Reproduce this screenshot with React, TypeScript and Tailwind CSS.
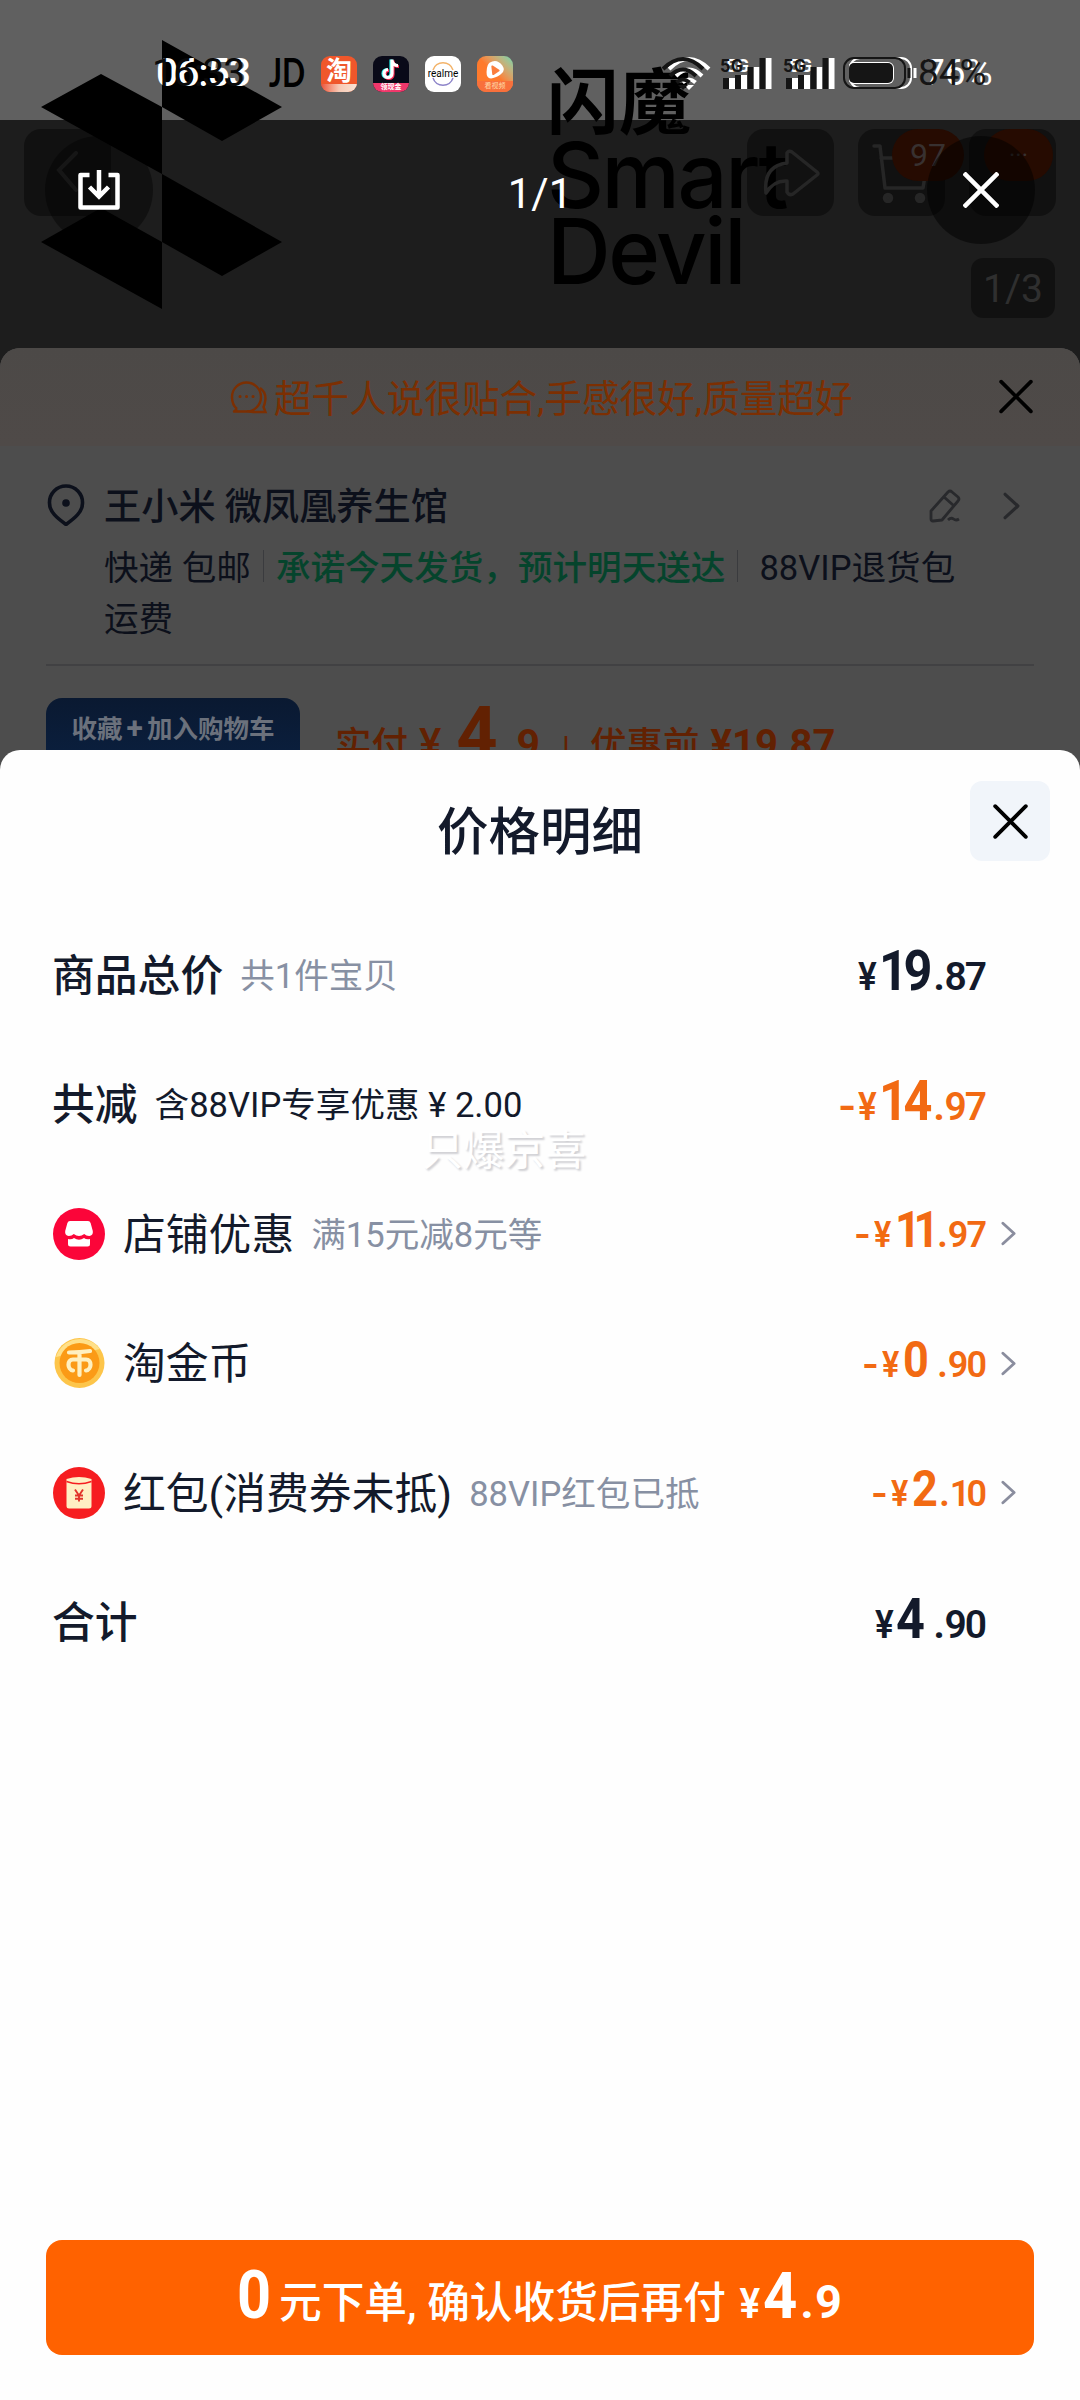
import React from 'react';

interface PriceProps {
  integer: string;
  decimal: string;
  negative?: boolean;
  small?: boolean;
  integerClass?: string;
  decimalClass?: string;
}

interface DetailRowProps extends PriceProps {
  label: string;
  note?: string;
  noteClass?: string;
  icon?: React.ReactNode;
  strong?: boolean;
  arrow?: boolean;
}

const CloseIcon = ({ className, width = 2.6 }: { className: string; width?: number }) => (
  <svg viewBox="0 0 24 24" fill="none" stroke="currentColor" strokeWidth={width} strokeLinecap="round" className={className}>
    <path d="M1.5 1.5l21 21M22.5 1.5l-21 21" />
  </svg>
);

const Chevron = ({ className }: { className: string }) => (
  <svg viewBox="0 0 16 26" fill="none" stroke="currentColor" strokeWidth="3" strokeLinecap="round" strokeLinejoin="round" className={className}>
    <path d="M2 2l12 11L2 24" />
  </svg>
);

const ShopIcon = () => (
  <svg viewBox="0 0 52 52" className="h-[52px] w-[52px]">
    <circle cx="26" cy="26" r="26" fill="#fb0539" />
    <path d="M17 13h18q2 0 2.600 2l2.200 8q.6 4.500-3.600 5-3 0-5-2-2.500 2-5.200 2t-5.200-2q-2 2-5 2-4.200-.5-3.600-5l2.200-8q.6-2 2.600-2z" fill="#fff" />
    <path d="M15 31q3.500 1 6-1 2.500 1.800 5 1.800t5-1.800q2.500 2 6 1v5q0 2.500-2.500 2.500h-17Q15 38.500 15 36z" fill="#fff" />
  </svg>
);

const CoinIcon = () => (
  <svg viewBox="0 0 52 52" className="h-[52px] w-[52px]">
    <circle cx="26.500" cy="26" r="25" fill="#fdc54a" />
    <path d="M3 20A25 25 0 0 1 47 12L38 14 12 18z" fill="#ffe08a" />
    <circle cx="26.500" cy="26" r="20" fill="#fb9a16" />
    <g fill="none" stroke="#fff0c0" strokeWidth="4.200" strokeLinecap="round">
      <path d="M16 15.500q11 0 21-1.500M26.500 15v23M20 33.500c-6-1-6-11 0-11h13c6 0 6 10 0 11" />
    </g>
  </svg>
);

const PacketIcon = () => (
  <svg viewBox="0 0 52 52" className="h-[52px] w-[52px]">
    <circle cx="26" cy="26" r="26" fill="#f61d20" />
    <path d="M13.500 12q12.500-4 25 0v27q0 2.500-2.500 2.500H16q-2.500 0-2.500-2.500z" fill="#ffefc4" />
    <path d="M13.500 14.500q12.500 4.500 25 0" fill="none" stroke="#f61d20" strokeWidth="1.500" />
    <path d="M22 22.500l4 6 4-6M26 28.500v6M22 28.500h8M22 31.800h8" fill="none" stroke="#e2342c" strokeWidth="1.900" />
  </svg>
);

const Price = ({ integer, decimal, negative, small, integerClass = 'mr-[8px]', decimalClass = 'tracking-[-2px]' }: PriceProps) => (
  <div className={`mb-[7px] flex items-baseline leading-none font-bold ${small ? 'text-[36px]' : 'text-[39px]'}`}>
    {negative && <span className="mr-[6px] inline-block w-[14px] origin-left scale-x-[1.2] text-center">-</span>}
    <span className="inline-block w-[21px] origin-left scale-x-[0.9] font-semibold">¥</span>
    <span className={`inline-block origin-left scale-x-[0.9] ${integerClass} ${small ? 'text-[50px]' : 'text-[56px]'}`}>{integer}</span>
    <span className="w-[11px] text-center">.</span>
    <span className={`font-semibold ${decimalClass}`}>{decimal}</span>
  </div>
);

const DetailRow = ({ label, note, noteClass = 'text-[#8790a3]', icon, strong, arrow, ...price }: DetailRowProps) => (
  <div className="flex h-[129.500px] items-center pl-[52px]">
    {icon && <div className="mr-[18px] ml-px shrink-0">{icon}</div>}
    <span className={`mt-[3px] text-[42.800px] leading-none whitespace-nowrap ${strong ? 'font-medium' : 'font-normal'}`}>{label}</span>
    {note && <span className={`mt-[3px] ml-[17px] text-[34.600px] leading-none whitespace-nowrap ${noteClass}`}>{note}</span>}
    <div className={`ml-auto flex items-center ${price.negative ? 'text-[#f26a13]' : 'text-[#131a2b]'}`}>
      <Price {...price} />
      <div className="w-[95px] pl-[16px]">{arrow && <Chevron className="h-[25px] w-[15px] text-[#8a8d9e]" />}</div>
    </div>
  </div>
);

const Signal = () => (
  <svg viewBox="0 0 48 34" className="h-[34px] w-[48px]" fill="currentColor">
    <path d="M3 22h6v11H3zM15 19h6v14h-6zM27.500 11h6v22h-6zM39.500 2h6v31h-6z" />
    <text x="0" y="16" fontSize="18" fontWeight="700" fontFamily="Roboto" textLength="23">5G</text>
  </svg>
);

const StatusIcons = ({ percent, charged }: { percent: string; charged?: boolean }) => (
  <div className="flex items-center">
    <svg viewBox="0 0 44 34" className="mr-[15px] h-[34px] w-[44px]" fill="none" stroke="currentColor" strokeWidth="4">
      <path d="M2 13q20-20 40 0M9 20q13-13 26 0M15.500 26.500q6.500-6 13 0" />
      <path d="M22 34l-5-5h10z" fill="currentColor" stroke="none" />
    </svg>
    <Signal />
    <div className="w-[15px]" />
    <Signal />
    <svg viewBox="0 0 70 34" className="ml-[12px] h-[34px] w-[70px]" fill="none" stroke="currentColor">
      <rect x="1" y="2" width="61" height="30" rx="10" strokeWidth="2" />
      {charged ? (
        <rect x="6" y="7" width="44" height="20" rx="5" fill="currentColor" stroke="none" />
      ) : (
        <rect x="-1" y="6" width="46" height="22" rx="6" fill="currentColor" stroke="none" />
      )}
      <path d="M66 12v10" strokeWidth="3" />
    </svg>
    <span className="ml-[5px] text-[37px] leading-none">{percent}</span>
  </div>
);

// Notification icons shown next to the clock
const AppIcons = () => (
  <div className="flex gap-[16px]">
    <div className="flex h-[36px] w-[36px] flex-col items-center overflow-hidden rounded-[9px] bg-[#f0572b]">
      <span className="mt-[2px] text-[26px] leading-[26px] font-bold text-white">淘</span>
      <div className="h-[8px] w-full bg-linear-to-r from-[#e8503a] via-[#f7c9b4] to-[#f9e4d6]" />
    </div>
    <div className="flex h-[36px] w-[36px] flex-col items-center overflow-hidden rounded-[9px] bg-[#090a18]">
      <svg viewBox="0 0 24 26" className="h-[27px] w-[24px] shrink-0" fill="none" strokeWidth="3.200">
        <path d="M13 3v14a4 4 0 1 1-4-4M13 4q1 5 6 5" stroke="#25f4ee" transform="translate(-1 0)" />
        <path d="M13 3v14a4 4 0 1 1-4-4M13 4q1 5 6 5" stroke="#fe2c55" transform="translate(1 1)" />
        <path d="M13 3v14a4 4 0 1 1-4-4M13 4q1 5 6 5" stroke="#fff" />
      </svg>
      <div className="h-[9px] w-full bg-[#f0386b] text-center text-[7px] leading-[9px] font-bold text-white">领现金</div>
    </div>
    <div className="relative flex h-[36px] w-[36px] items-center justify-center rounded-[9px] bg-white">
      <svg viewBox="0 0 36 36" className="absolute inset-0" fill="none" strokeWidth="1.500">
        <path d="M8 14a10.500 10.500 0 0 1 20 0" stroke="#f3b46b" />
        <path d="M8 22a10.500 10.500 0 0 0 20 0" stroke="#8d84c9" />
      </svg>
      <span className="text-[10px] leading-none text-black">realme</span>
    </div>
    <div className="flex h-[36px] w-[36px] flex-col items-center overflow-hidden rounded-[9px] bg-linear-to-tr from-[#ff7a2c] from-50% to-[#5fd6b0]">
      <svg viewBox="0 0 24 24" className="mt-[3px] h-[22px] w-[24px] shrink-0">
        <path d="M6 4q8-5 14 3 4 6-2 10-7 5-12 4-4-2-3-9 .5-6 3-8z" fill="#fff" />
        <path d="M9 8l7 4.500-6 4z" fill="#fb7d3c" stroke="#fb7d3c" strokeWidth="2" strokeLinejoin="round" />
      </svg>
      <div className="h-[11px] w-full bg-[#f8703c] text-center text-[7px] leading-[10px] text-[#ffd9a8]">看视频</div>
    </div>
  </div>
);

const StatusBar = () => (
  <div className="relative h-[120px]">
    <div className="absolute top-[51px] left-[156px] text-[39px] leading-[44px] font-medium tracking-[-1px] text-white">06:53</div>
    <div className="absolute top-[51px] left-[152px] text-[39px] leading-[44px] tracking-[-1px] text-[#0a0a0a]">16:33</div>
    <div className="absolute top-[54px] left-[269px] flex items-center">
      <div className="w-[52px]">
        <span className="inline-block origin-left scale-x-[0.76] font-[Lato] text-[40px] leading-[36px] font-bold text-black">JD</span>
      </div>
      <AppIcons />
    </div>
    <div className="absolute top-[54px] left-[667px] text-white"><StatusIcons percent="76%" /></div>
    <div className="absolute top-[54px] left-[661px] text-[#151515]"><StatusIcons percent="84%" charged /></div>
  </div>
);

// Product picture that shows through the dark mask
const BrandArt = () => (
  <div className="absolute inset-0 text-black">
    <svg viewBox="0 0 1080 348" className="absolute inset-0">
      <path d="M162 40l120 67-60 34-60-34zM41 107l60-33 61 33v67zM162 174l120 68-60 34-60-34zM41 242l60-34 61 34v67z" />
    </svg>
    <div className="absolute top-[66px] left-[547px] text-[72px] leading-[76px] font-bold">闪魔</div>
    <div className="absolute top-[137px] left-[547px] origin-left scale-x-[0.97] font-[Inter] text-[91px] leading-[76px] font-medium tracking-[-2.500px]">
      <div>Smart</div>
      <div>Devil</div>
    </div>
  </div>
);

const NavBar = () => (
  <div className="relative flex items-start px-[24px] pt-[9px] text-[#262626]">
    <div className="flex h-[87px] w-[87px] items-center justify-center rounded-[17px] bg-black/40">
      <svg viewBox="0 0 24 44" className="h-[44px] w-[24px]" fill="none" stroke="currentColor" strokeWidth="4" strokeLinecap="round">
        <path d="M20 2L3 19l17 20" />
      </svg>
    </div>
    <div className="ml-auto flex gap-[24px]">
      <div className="flex h-[87px] w-[87px] items-center justify-center rounded-[17px] bg-black/40">
        <svg viewBox="0 0 58 48" className="h-[48px] w-[58px]" fill="none" stroke="currentColor" strokeWidth="3.500" strokeLinejoin="round">
          <path d="M25 12V4q2-3 5-1l25 20q2 2 0 3L31 45q-4 2-6-2V32Q12 31 4 44 1 17 25 14z" />
        </svg>
      </div>
      <div className="relative flex h-[87px] w-[87px] items-center rounded-[17px] bg-black/40 pl-[14px]">
        <svg viewBox="0 0 58 60" className="h-[60px] w-[58px]" fill="none" stroke="currentColor" strokeWidth="3.500" strokeLinecap="round" strokeLinejoin="round">
          <path d="M2 3h6l5 42h38l5-30H9" />
          <circle cx="16" cy="55" r="3.500" fill="currentColor" />
          <circle cx="48" cy="55" r="3.500" fill="currentColor" />
        </svg>
        <div className="absolute top-0 left-[34px] flex h-[52px] w-[72px] items-center justify-center rounded-full bg-[#260b01] text-[32px] text-[#383130]">97</div>
      </div>
      <div className="h-[87px] w-[87px] rounded-[17px] bg-black/40">
        <div className="ml-[15px] flex h-[52px] w-[69px] items-center justify-center rounded-full bg-[#260b01] text-[24px] text-[#383130]">···</div>
      </div>
    </div>
  </div>
);

const ViewerControls = () => (
  <div className="absolute inset-x-0 top-[136px] flex h-[108px] items-center justify-between pr-[45px] pl-[45px] text-white">
    <div className="flex h-[108px] w-[108px] items-center justify-center rounded-full bg-black/40">
      <svg viewBox="0 0 42 42" className="h-[42px] w-[42px]" fill="none" stroke="currentColor" strokeWidth="4.500">
        <path d="M11.500 6H2.500v32.500h37V6h-9" strokeLinejoin="round" />
        <path d="M21 1v26M11.500 18l9.500 9.500 9.500-9.500" />
      </svg>
    </div>
    <span className="mt-[7px] text-[42px] leading-none">1/1</span>
    <div className="flex h-[108px] w-[108px] items-center justify-center rounded-full bg-black/50">
      <svg viewBox="0 0 36 36" className="h-[36px] w-[36px]" stroke="currentColor" strokeWidth="4.500">
        <path d="M1 1l34 34M35 1L1 35" />
      </svg>
    </div>
  </div>
);

const OrderSheet = () => (
  <div className="h-[422px] overflow-hidden rounded-t-[20px] bg-[#4d4d4d] text-[#0c101b]">
    <div className="relative flex h-[98px] items-center bg-linear-to-b from-[#4c4947] to-[#4f4a48] pl-[230px] text-[#7c2f02]">
      <svg viewBox="0 0 38 34" className="mr-[6px] h-[34px] w-[38px]" fill="none" stroke="currentColor" strokeWidth="2.400">
        <path d="M7 29Q2 25 2 17a14.500 14.500 0 1 1 14.500 14.500H4l3-2.500" strokeLinejoin="round" />
        <path d="M30 8q7 5 5 14-.5 3-1.500 5l2 5H23q-4 0-6-1" />
        <path d="M10 16.500h.1M16.500 16.500h.1M23 16.500h.1" strokeWidth="3" strokeLinecap="round" />
      </svg>
      <span className="mt-[5px] text-[37.600px] leading-none whitespace-nowrap">超千人说很贴合,手感很好,质量超好</span>
      <CloseIcon className="absolute top-[31px] left-[999px] h-[35px] w-[34px] text-black" />
    </div>

    <div className="mx-[46px] h-[220px] border-b-2 border-[#414143]">
      <div className="flex h-[80px] items-end">
        <svg viewBox="0 0 38 42" className="ml-[1px] h-[42px] w-[38px]" fill="none" stroke="currentColor" strokeWidth="3.600">
          <path d="M19 2a16.500 16.500 0 0 1 16.500 17C35.500 28 28 34 19 40.500 10 34 2.500 28 2.500 19A16.500 16.500 0 0 1 19 2z" strokeLinejoin="round" />
          <circle cx="19" cy="19" r="3.800" fill="currentColor" stroke="none" />
        </svg>
        <span className="ml-[19px] text-[37.200px] leading-[37px] font-medium">王小米 微凤凰养生馆</span>
        <svg viewBox="0 0 32 34" className="mb-[3px] ml-auto h-[34px] w-[32px] text-[#28292c]" fill="none" stroke="currentColor" strokeWidth="2.800" strokeLinejoin="round">
          <path d="M2 22L19 3q2-2 4 0l6 5q2 2 0 4L13 31l-9 1q-2 0-2-2zM15 8l9 8M19 31q3-3 5.500-1t5.500 0" />
        </svg>
        <Chevron className="mr-[14px] mb-[6px] ml-[42px] h-[28px] w-[17px] text-[#28292c]" />
      </div>
      <div className="flex pt-[17px] pl-[58px] text-[34.600px] leading-[51px] whitespace-nowrap">
        <span>快递 包邮</span>
        <div className="mt-[7px] mr-[12px] ml-[12px] h-[32px] w-px bg-[#3a3b3e]" />
        <span className="font-medium text-[#05442c]">承诺今天发货，预计明天送达</span>
        <div className="mt-[7px] mr-[21px] ml-[12px] h-[32px] w-px bg-[#3a3b3e]" />
        <span>88VIP退货包</span>
      </div>
      <div className="pl-[58px] text-[34.600px] leading-[51px]">运费</div>
    </div>

    <div className="flex items-start px-[46px] pt-[32px]">
      <div className="h-[90px] w-[254px] rounded-[16px] bg-linear-to-b from-[#0a1931] to-[#0a2244] pt-[16px] text-center text-[25.500px] leading-[28px] font-bold whitespace-nowrap text-[#6b717c]">
        收藏<span className="mx-[4px] text-[30px]">+</span>加入购物车
      </div>
      <div className="ml-[35px] flex h-[60px] items-baseline text-[36.500px] leading-[72px] font-medium whitespace-nowrap text-[#622102]">
        <span>实付</span>
        <span className="ml-[11px] text-[42px]">¥</span>
        <span className="ml-[15px] text-[72px] font-bold">4</span>
        <span className="ml-[4px] text-[41px] font-bold tracking-[3px]">.9</span>
        <span className="ml-[19px] text-[32px]">|</span>
        <span className="ml-[20px]">优惠前</span>
        <span className="ml-[11px] text-[40px] font-bold">¥19.87</span>
      </div>
    </div>
  </div>
);

const PriceSheet = () => (
  <div className="relative -mt-[20px] flex h-[1650px] flex-col rounded-t-[20px] bg-[#fefefe] text-[#131a2b]">
    <div className="flex h-[160px] items-start">
      <h1 className="w-full pt-[55px] text-center text-[51.500px] leading-[56px] font-medium">价格明细</h1>
      <button className="absolute top-[31px] right-[30px] flex h-[80px] w-[80px] items-center justify-center rounded-[12px] bg-[#f1f5fa]">
        <CloseIcon className="h-[35px] w-[35px] text-black" />
      </button>
    </div>

    <DetailRow label="商品总价" note="共1件宝贝" strong integer="19" decimal="87" integerClass="tracking-[-5px]" />
    <DetailRow label="共减" note="含88VIP专享优惠 ¥ 2.00" noteClass="text-[#131a2b]" strong integer="14" decimal="97" negative integerClass="tracking-[-5px]" />
    <DetailRow icon={<ShopIcon />} label="店铺优惠" note="满15元减8元等" integer="11" decimal="97" negative small arrow integerClass="tracking-[-8px]" />
    <DetailRow icon={<CoinIcon />} label="淘金币" integer="0" decimal="90" negative small arrow integerClass="mr-[5px]" />
    <DetailRow icon={<PacketIcon />} label="红包(消费券未抵)" note="88VIP红包已抵" integer="2" decimal="10" negative small arrow integerClass="-mr-[2px]" decimalClass="tracking-[-4px] mr-[2px]" />
    <DetailRow label="合计" strong integer="4" decimal="90" integerClass="mr-[5px]" />

    <div className="pointer-events-none absolute top-[376px] left-[422px] text-[41px] leading-[50px] text-white [text-shadow:2px_2px_2px_#cfcfd3]">
      只爆京喜
    </div>

    <button className="mx-[46px] mt-auto mb-[45px] flex h-[115px] items-baseline justify-center rounded-[16px] bg-[#ff6200] pt-[16px] text-[42.700px] leading-[80px] font-medium whitespace-nowrap text-white">
      <span className="mr-[4px] inline-block origin-left scale-x-[0.9] text-[66px] font-bold">0</span>
      <span>元下单, 确认收货后再付</span>
      <span className="ml-[13px] inline-block w-[24px] origin-left scale-x-[0.9] text-[43px] font-semibold">¥</span>
      <span className="inline-block origin-left scale-x-[0.92] text-[65px] font-bold">4</span>
      <span className="text-[47px] font-bold tracking-[1px]">.9</span>
    </button>
  </div>
);

export default function App() {
  return (
    <div className="h-[2400px] w-[1080px] overflow-hidden bg-[#1d1d1d] font-[Roboto,'Noto_Sans_CJK_SC',sans-serif]">
      <div className="relative h-[348px]">
        <div className="absolute inset-x-0 top-0 h-[120px] bg-[#606060]" />
        <BrandArt />
        <StatusBar />
        <NavBar />
        <div className="relative mt-[42px] mr-[25px] ml-auto flex h-[60px] w-[84px] items-center justify-center rounded-[12px] bg-black/40 pt-[3px] text-[39px] text-[#2f2f2f]">
          1/3
        </div>
        <ViewerControls />
      </div>
      <OrderSheet />
      <PriceSheet />
    </div>
  );
}
